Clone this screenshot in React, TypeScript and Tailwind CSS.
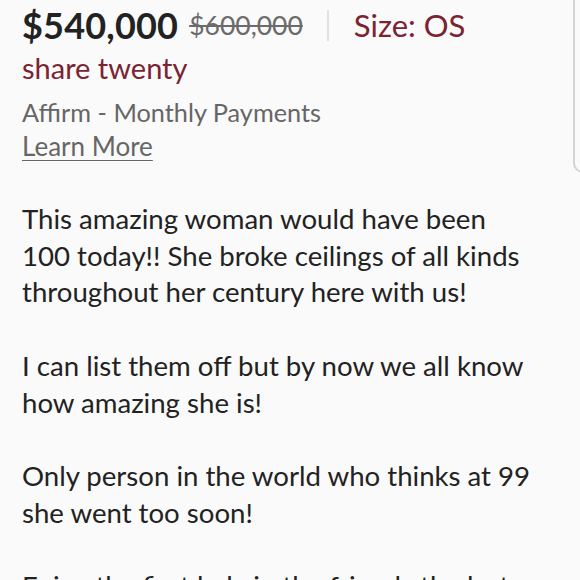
export default function App() {
  const font = { fontFamily: 'Lato, "Open Sans", sans-serif' }
  return (
    <div className="relative w-[580px] h-[580px] overflow-hidden bg-[#fafafa]" style={font}>
      <div className="absolute left-[573px] top-[-20px] w-[30px] h-[193px] border-l-2 border-b-2 border-[#d4d4d4] rounded-bl-[10px]" />

      <div className="px-[22px] pt-[4px]">
        <div className="flex items-center h-[42px]">
          <span className="text-[36px] font-bold text-[#222] tracking-[0.2px]">$540,000</span>
          <span className="ml-[11px] text-[26.5px] text-[#6b6b6b] line-through mt-[2px]">$600,000</span>
          <span className="ml-[24px] w-[2px] h-[31px] bg-[#e4dfdb]" />
          <span className="ml-[25px] text-[31px] text-[#7a2332]">Size: OS</span>
        </div>
        <div className="mt-[4px] text-[29px] text-[#7a2332] leading-[36px]">share twenty</div>
        <div className="mt-[10px] text-[25.3px] text-[#666] leading-[32px]">Affirm - Monthly Payments</div>
        <div className="mt-[2px] text-[26px] text-[#666] leading-[33px] underline underline-offset-[4px] decoration-1">Learn More</div>

        <div className="mt-[38px] text-[27.6px] text-[#222] leading-[36.7px]">
          <p>This amazing woman would have been</p>
          <p>100 today!! She broke ceilings of all kinds</p>
          <p>throughout her century here with us!</p>
          <p>&nbsp;</p>
          <p>I can list them off but by now we all know</p>
          <p>how amazing she is!</p>
          <p>&nbsp;</p>
          <p>Only person in the world who thinks at 99</p>
          <p>she went too soon!</p>
          <p>&nbsp;</p>
          <p>Enjoy the first lady in the friends the last</p>
        </div>
      </div>
    </div>
  )
}
